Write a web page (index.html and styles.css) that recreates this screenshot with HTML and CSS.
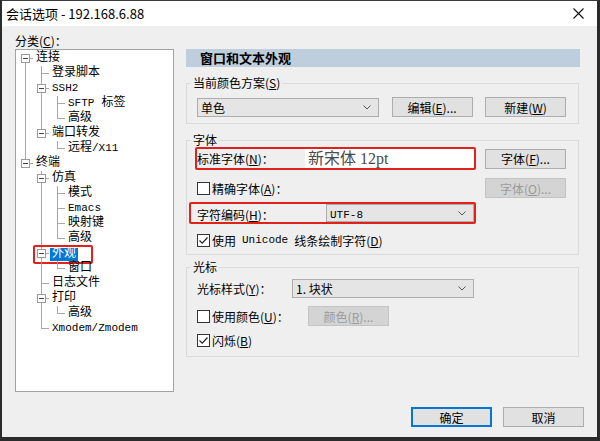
FILE: index.html
```html
<!DOCTYPE html>
<html lang="zh-CN">
<head>
  <meta charset="UTF-8">
  <title>会话选项</title>
  <link rel="stylesheet" href="styles.css">
</head>
<body>
  <div class="window">
    <div class="titlebar">
      <span class="title">会话选项 - 192.168.6.88</span>
      <svg class="close" width="11" height="11" viewBox="0 0 11 11"><path d="M0.5 0.5L10.5 10.5M10.5 0.5L0.5 10.5" stroke="#111" stroke-width="1.1"/></svg>
    </div>

    <div class="main">
      <div class="category">
        <div class="cat-label">分类(<u>C</u>)：</div>
        <div class="tree">
          <div class="row"><i class="c f"><b class="box"></b></i><span class="txt">连接</span></div>
          <div class="row"><i class="c v"></i><i class="c t"></i><span class="txt">登录脚本</span></div>
          <div class="row"><i class="c v"></i><i class="c t"><b class="box"></b></i><span class="txt en">SSH2</span></div>
          <div class="row"><i class="c v"></i><i class="c v"></i><i class="c t"></i><span class="txt"><span class="en">SFTP</span> 标签</span></div>
          <div class="row"><i class="c v"></i><i class="c v"></i><i class="c l"></i><span class="txt">高级</span></div>
          <div class="row"><i class="c v"></i><i class="c l"><b class="box"></b></i><span class="txt">端口转发</span></div>
          <div class="row"><i class="c v"></i><i class="c"></i><i class="c l"></i><span class="txt">远程<span class="en">/X11</span></span></div>
          <div class="row"><i class="c l"><b class="box"></b></i><span class="txt">终端</span></div>
          <div class="row"><i class="c"></i><i class="c t"><b class="box"></b></i><span class="txt">仿真</span></div>
          <div class="row"><i class="c"></i><i class="c v"></i><i class="c t"></i><span class="txt">模式</span></div>
          <div class="row"><i class="c"></i><i class="c v"></i><i class="c t"></i><span class="txt en">Emacs</span></div>
          <div class="row"><i class="c"></i><i class="c v"></i><i class="c t"></i><span class="txt">映射键</span></div>
          <div class="row"><i class="c"></i><i class="c v"></i><i class="c l"></i><span class="txt">高级</span></div>
          <div class="row"><i class="c"></i><i class="c t"><b class="box"></b></i><span class="txt sel">外观</span><span class="mark-tree"></span></div>
          <div class="row"><i class="c"></i><i class="c v"></i><i class="c l"></i><span class="txt">窗口</span></div>
          <div class="row"><i class="c"></i><i class="c t"></i><span class="txt">日志文件</span></div>
          <div class="row"><i class="c"></i><i class="c t"><b class="box"></b></i><span class="txt">打印</span></div>
          <div class="row"><i class="c"></i><i class="c v"></i><i class="c l"></i><span class="txt">高级</span></div>
          <div class="row"><i class="c"></i><i class="c l"></i><span class="txt en">Xmodem/Zmodem</span></div>
        </div>
      </div>

      <div class="panel">
        <div class="panel-head">窗口和文本外观</div>

        <fieldset class="group g-scheme">
          <legend>当前颜色方案(<u>S</u>)</legend>
          <div class="line">
            <div class="combo w-scheme">单色<svg class="chev" width="8" height="5" viewBox="0 0 8 5"><path d="M0.5 0.5L4 4L7.5 0.5" fill="none" stroke="#555"/></svg></div>
            <button class="btn">编辑(<u>E</u>)...</button>
            <button class="btn">新建(<u>W</u>)</button>
          </div>
        </fieldset>

        <fieldset class="group g-font">
          <legend>字体</legend>
          <div class="line first">
            <div class="mark mark-font">
              <span class="lbl w-font">标准字体(<u>N</u>)：</span>
              <div class="font-box">新宋体 12pt</div>
            </div>
            <button class="btn">字体(<u>F</u>)...</button>
          </div>
          <div class="line gap8">
            <label class="check"><span class="cb"></span>精确字体(<u>A</u>)：</label>
            <button class="btn" disabled>字体(<u>O</u>)...</button>
          </div>
          <div class="line gap4">
            <div class="mark mark-enc">
              <span class="lbl w-enc">字符编码(<u>H</u>)：</span>
              <div class="combo w-enc-combo"><span class="en">UTF-8</span><svg class="chev" width="8" height="5" viewBox="0 0 8 5"><path d="M0.5 0.5L4 4L7.5 0.5" fill="none" stroke="#555"/></svg></div>
            </div>
          </div>
          <div class="line gap8">
            <label class="check"><span class="cb on"><svg width="11" height="11" viewBox="0 0 11 11"><path d="M1.5 5.5L4.2 8.2L9.5 2.5" fill="none" stroke="#222" stroke-width="1.2"/></svg></span>使用<span class="en word">Unicode</span>线条绘制字符(<u>D</u>)</label>
          </div>
        </fieldset>

        <fieldset class="group g-cursor">
          <legend>光标</legend>
          <div class="line gap4">
            <span class="lbl w-style">光标样式(<u>Y</u>)：</span>
            <div class="combo w-style-combo">1. 块状<svg class="chev" width="8" height="5" viewBox="0 0 8 5"><path d="M0.5 0.5L4 4L7.5 0.5" fill="none" stroke="#555"/></svg></div>
          </div>
          <div class="line gap8">
            <label class="check w-color"><span class="cb"></span>使用颜色(<u>U</u>)：</label>
            <button class="btn" disabled>颜色(<u>R</u>)...</button>
          </div>
          <div class="line gap6">
            <label class="check"><span class="cb on"><svg width="11" height="11" viewBox="0 0 11 11"><path d="M1.5 5.5L4.2 8.2L9.5 2.5" fill="none" stroke="#222" stroke-width="1.2"/></svg></span>闪烁(<u>B</u>)</label>
          </div>
        </fieldset>
      </div>
    </div>

    <div class="footer">
      <button class="btn btn-default">确定</button>
      <button class="btn">取消</button>
    </div>
  </div>
</body>
</html>
```

FILE: styles.css
```css
body {
  margin: 0;
  font-family: "Noto Sans CJK SC", "Microsoft YaHei", sans-serif;
  font-size: 12px;
  color: #000;
  background: #fff;
}
.window {
  width: 600px;
  height: 441px;
  box-sizing: border-box;
  border-top: 1px solid #3a3a3a;
  border-left: 2px solid #2b2b2b;
  border-right: 3px solid #2b2b2b;
  border-bottom: 4px solid #2b2b2b;
  background: #efefef;
  display: flex;
  flex-direction: column;
}
.titlebar {
  height: 25px;
  background: #fff;
  display: flex;
  align-items: center;
  justify-content: space-between;
  padding: 0 13px 0 4px;
  flex: none;
}
.title {
  font-size: 13px;
  line-height: 25px;
}
.main {
  display: flex;
  align-items: flex-start;
  gap: 12px;
  padding-left: 13px;
}
.category {
  width: 159px;
  padding-top: 7px;
}
.cat-label {
  line-height: 16px;
}
.tree {
  height: 343px;
  box-sizing: border-box;
  border: 1px solid #a3a3a3;
  background: #fff;
  padding: 1px 0 0 1px;
  font-family: "Liberation Mono", "Noto Sans CJK SC", monospace;
  font-size: 12px;
  --ln: #a8a8a8;
}
.row {
  position: relative;
  display: flex;
  height: 15px;
  line-height: 15px;
}
.c {
  display: block;
  flex: none;
  width: 16px;
  height: 15px;
}
.c.v {
  background: linear-gradient(var(--ln), var(--ln)) 8px 0 / 1px 15px no-repeat;
}
.c.t {
  background:
    linear-gradient(var(--ln), var(--ln)) 8px 0 / 1px 15px no-repeat,
    linear-gradient(var(--ln), var(--ln)) 8px 7px / 8px 1px no-repeat;
}
.c.l {
  background:
    linear-gradient(var(--ln), var(--ln)) 8px 0 / 1px 8px no-repeat,
    linear-gradient(var(--ln), var(--ln)) 8px 7px / 8px 1px no-repeat;
}
.c.f {
  background:
    linear-gradient(var(--ln), var(--ln)) 8px 7px / 1px 8px no-repeat,
    linear-gradient(var(--ln), var(--ln)) 8px 7px / 8px 1px no-repeat;
}
.box {
  display: block;
  width: 9px;
  height: 9px;
  box-sizing: border-box;
  margin: 3px 0 0 4px;
  border: 1px solid #9a9a9a;
  background: linear-gradient(#444, #444) center / 5px 1px no-repeat, #fff;
}
.txt {
  margin-left: 3px;
  white-space: nowrap;
}
.en {
  font-family: "Liberation Mono", monospace;
  font-size: 11px;
}
.en.word {
  margin: 0 6px;
}
.txt.sel {
  margin-left: 1px;
  margin-top: 2px;
  padding: 0 2px;
  height: 13px;
  line-height: 13px;
  background: #0078d7;
  color: #fff;
}
.mark-tree {
  position: absolute;
  left: 16px;
  top: -1px;
  width: 60px;
  height: 19px;
  box-sizing: border-box;
  border: 2px solid #e3211b;
  border-radius: 2px;
}
.panel {
  width: 394px;
  padding-top: 23px;
}
.panel-head {
  height: 18px;
  line-height: 18px;
  background: #bfcedc;
  font-size: 13px;
  font-weight: bold;
  padding-left: 14px;
}
.group {
  margin: 8px 0 0;
  padding: 0 12px 6px 10px;
  border: 1px solid #dadada;
  width: 393px;
  box-sizing: border-box;
  min-width: 0;
}
.group legend {
  padding: 0 2px;
  margin-left: -6px;
  line-height: 16px;
}
.g-cursor {
  margin-top: 4px;
  padding-bottom: 8px;
}
.line {
  display: flex;
  align-items: center;
  justify-content: space-between;
}
.g-scheme .line {
  margin-top: 6px;
}
.line.first {
  margin-top: -1px;
}
.line.gap8 { margin-top: 8px; }
.line.gap6 { margin-top: 6px; }
.line.gap4 { margin-top: 4px; }
.g-cursor .line { justify-content: flex-start; }
.btn {
  width: 81px;
  height: 20px;
  box-sizing: border-box;
  padding: 0;
  border: 1px solid #adadad;
  background: #e1e1e1;
  font-family: inherit;
  font-size: 12px;
  color: #000;
}
.btn:disabled {
  background: #d4d4d4;
  border-color: #c4c4c4;
  color: #9a9a9a;
}
.combo {
  position: relative;
  height: 19px;
  line-height: 17px;
  box-sizing: border-box;
  border: 1px solid #adadad;
  background: #e5e5e5;
  padding-left: 3px;
}
.chev {
  position: absolute;
  right: 7px;
  top: 6px;
}
.w-scheme { width: 182px; }
.mark {
  display: flex;
  align-items: center;
  box-sizing: border-box;
  border: 2px solid #e3211b;
  border-radius: 2px;
}
.mark-font {
  width: 281px;
  height: 23px;
  margin-left: -2px;
}
.w-font { width: 108px; }
.font-box {
  width: 169px;
  height: 19px;
  background: #fff;
  padding-left: 3px;
  box-sizing: border-box;
  font-family: "Liberation Serif", "Noto Sans CJK SC", serif;
  font-size: 16px;
  line-height: 19px;
  color: #4a4a4a;
}
.mark-enc {
  width: 287px;
  height: 22px;
  margin-left: -8px;
  padding-left: 6px;
}
.w-enc { width: 129px; padding-top: 3px; }
.w-enc-combo { width: 148px; height: 18px; line-height: 16px; }
.lbl { flex: none; }
.w-style { width: 95px; }
.w-style-combo { width: 182px; }
.check {
  display: flex;
  align-items: center;
  height: 16px;
}
.w-color { width: 111px; }
.cb {
  display: block;
  width: 13px;
  height: 13px;
  box-sizing: border-box;
  border: 1px solid #333;
  background: #fff;
  margin-right: 2px;
}
.cb svg { display: block; }
.footer {
  display: flex;
  justify-content: flex-end;
  gap: 11px;
  margin-top: 15px;
  padding-right: 13px;
}
.btn-default {
  border-color: #0078d7;
  box-shadow: inset 0 0 0 1px #0078d7;
}
```
